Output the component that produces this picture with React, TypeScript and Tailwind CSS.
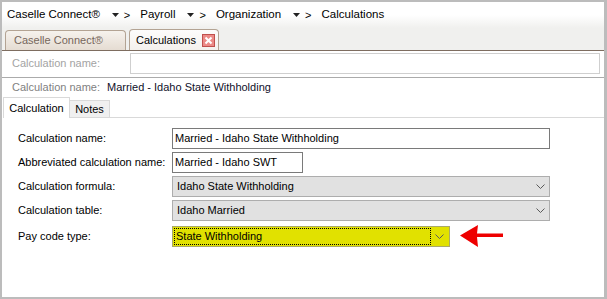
import React from "react";

function Tri() {
  return (
    <svg width="7" height="4" viewBox="0 0 7 4" className="block">
      <path d="M0 0 L7 0 L3.5 4 Z" fill="#222" />
    </svg>
  );
}

function Chevron() {
  return (
    <svg width="9" height="5" viewBox="0 0 9 5" className="block">
      <path d="M0.5 0.5 L4.5 4.5 L8.5 0.5" fill="none" stroke="#5a5a5a" strokeWidth="1" />
    </svg>
  );
}

function Crumb({ text, arrow = true, sep = true }: { text: string; arrow?: boolean; sep?: boolean }) {
  return (
    <div className="flex items-center">
      <span>{text}</span>
      {arrow && (
        <span className="ml-[12px]">
          <Tri />
        </span>
      )}
      {sep && <span className="ml-[5px] mr-[10px] text-[11px]">&gt;</span>}
    </div>
  );
}

function Select({ value, width }: { value: string; width: string }) {
  return (
    <div
      className={`${width} h-[21px] bg-[#e1e1e1] border border-[#adadad] flex items-center justify-between pl-[4px] pr-[4px]`}
    >
      <span>{value}</span>
      <Chevron />
    </div>
  );
}

export default function App() {
  return (
    <div className="w-[607px] h-[299px] overflow-hidden border-t-2 border-l-2 border-b-2 border-r-[3px] border-[#bcbcbc] flex flex-col font-['Liberation_Sans',Arial,sans-serif] text-[11px] text-black">
      {/* breadcrumb */}
      <div className="h-[26px] shrink-0 bg-gradient-to-b from-white via-white to-[#f0f0ee] flex items-center pl-[5px] text-[11.5px]">
        <Crumb text="Caselle Connect®" />
        <Crumb text="Payroll" />
        <Crumb text="Organization" />
        <Crumb text="Calculations" arrow={false} sep={false} />
      </div>
      {/* window tabs */}
      <div className="h-[22px] shrink-0 bg-[#f0f0ee] flex items-end pl-[3px] gap-[3px]">
        <div className="w-[121px] h-[20px] rounded-t-[4px] border border-b-0 border-[#b3a393] bg-gradient-to-b from-[#f6f2ed] to-[#e5dcd2] flex items-center pl-[8px] text-[#76665b]">
          Caselle Connect®
        </div>
        <div className="w-[90px] h-[21px] rounded-t-[4px] border border-b-0 border-[#b3a393] bg-gradient-to-b from-[#fdfcfb] to-[#f4f1ed] flex items-center pl-[6px] pr-[3px] justify-between">
          <span>Calculations</span>
          <span className="w-[13px] h-[13px] border border-[#c0504d] bg-[#ec8a86] flex items-center justify-center">
            <svg width="9" height="9" viewBox="0 0 9 9">
              <path d="M1.5 1.5 L7.5 7.5 M7.5 1.5 L1.5 7.5" stroke="white" strokeWidth="2" />
            </svg>
          </span>
        </div>
      </div>
      <div className="h-px shrink-0 bg-[#7e6d60]" />
      {/* content */}
      <div className="flex-1 bg-white flex flex-col">
        <div className="flex items-center pt-[2px] h-[23px] shrink-0">
          <div className="w-[128px] pl-[10px] text-[#a3a3a3]">Calculation name:</div>
          <div className="w-[470px] h-[21px] border border-[#cfcfcf] bg-white" />
        </div>
        <div className="h-[3px] shrink-0" />
        <div className="h-px shrink-0 bg-[#ababab]" />
        <div className="h-[19px] shrink-0 flex items-center pl-[10px]">
          <span className="text-[#7f7f7f] w-[95px]">Calculation name:</span>
          <span className="text-[#10102a]">Married - Idaho State Withholding</span>
        </div>
        {/* inner tabs */}
        <div className="h-[21px] shrink-0 flex items-end pl-[1px]">
          <div className="w-[67px] h-[21px] border border-b-0 border-[#d9d9d9] bg-white flex items-center justify-center">
            Calculation
          </div>
          <div className="w-[40px] h-[18px] border border-l-0 border-[#d9d9d9] bg-[#f0f0f0] flex items-center justify-center">
            Notes
          </div>
          <div className="flex-1 h-px bg-[#d9d9d9]" />
        </div>
        {/* panel */}
        <div className="flex-1 bg-white flex flex-col gap-[3px] pt-[10px] pl-[16px]">
          <div className="flex items-center">
            <div className="w-[154px]">Calculation name:</div>
            <div className="w-[378px] h-[21px] border border-[#7a7a7a] bg-white flex items-center pl-[2px]">
              Married - Idaho State Withholding
            </div>
          </div>
          <div className="flex items-center">
            <div className="w-[154px]">Abbreviated calculation name:</div>
            <div className="w-[131px] h-[21px] border border-[#7a7a7a] bg-white flex items-center pl-[2px]">
              Married - Idaho SWT
            </div>
          </div>
          <div className="flex items-center">
            <div className="w-[154px]">Calculation formula:</div>
            <Select value="Idaho State Withholding" width="w-[378px]" />
          </div>
          <div className="flex items-center">
            <div className="w-[154px]">Calculation table:</div>
            <Select value="Idaho Married" width="w-[378px]" />
          </div>
          <div className="flex items-center">
            <div className="w-[154px]">Pay code type:</div>
            <div className="w-[278px] h-[21px] bg-[#e1e100] border border-[#a9a96a] flex items-center p-[1px]">
              <div className="w-[257px] h-[17px] border border-dotted border-black flex items-center pl-[1px]">
                State Withholding
              </div>
              <div className="flex-1 flex items-center justify-center">
                <Chevron />
              </div>
            </div>
            <svg width="46" height="24" viewBox="0 0 46 24" className="ml-[9px]">
              <path d="M1 11.5 L19 1 L18 9.5 L44 9.5 L44 13 L18 13 L19 23 Z" fill="#ee0000" />
            </svg>
          </div>
        </div>
      </div>
    </div>
  );
}
